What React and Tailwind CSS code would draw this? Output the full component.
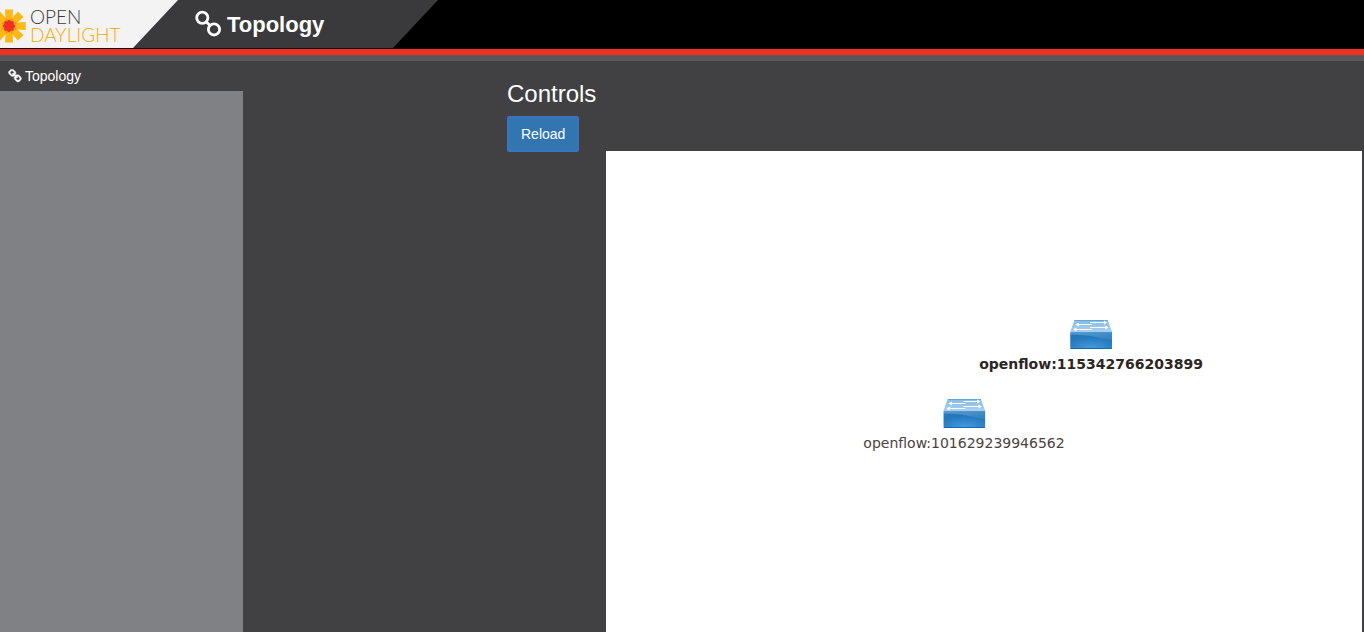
import React from "react";

const nodes = [
  { id: "openflow:115342766203899", x: 485, y: 169, bold: true },
  { id: "openflow:101629239946562", x: 358, y: 248, bold: false },
];

const petalAngles = [0, 45, 90, 135, 180, 225, 270, 315];

function ChainIcon({ className }) {
  return (
    <svg
      viewBox="0 0 1792 1792"
      fill="currentColor"
      stroke="currentColor"
      strokeWidth="70"
      className={className}
      aria-hidden="true"
    >
      <path d="M1520 1216q0-40-28-68l-208-208q-28-28-68-28-42 0-72 32 3 3 19 18.5t21.5 21.5 15 19 13 25.5 3.5 27.5q0 40-28 68t-68 28q-15 0-27.5-3.5t-25.5-13-19-15-21.5-21.5-18.5-19q-33 31-33 73 0 40 28 68l206 207q27 27 68 27 40 0 68-26l147-146q28-28 28-67zm-703-705q0-40-28-68l-206-207q-28-28-68-28-39 0-68 27l-147 146q-28 28-28 67 0 40 28 68l208 208q27 27 68 27 42 0 72-31-3-3-19-18.5t-21.5-21.5-15-19-13-25.5-3.5-27.5q0-40 28-68t68-28q15 0 27.5 3.5t25.5 13 19 15 21.5 21.5 18.5 19q33-31 33-73zm895 705q0 120-85 203l-147 146q-83 83-203 83-121 0-204-85l-206-207q-83-83-83-203 0-123 88-209l-88-88q-86 88-208 88-120 0-204-84l-208-208q-84-84-84-204t85-203l147-146q83-83 203-83 121 0 204 85l206 207q83 83 83 203 0 123-88 209l88 88q86-88 208-88 120 0 204 84l208 208q84 84 84 204z" />
    </svg>
  );
}

function NodesIcon() {
  return (
    <svg viewBox="0 0 28 28" className="h-7 w-7" fill="none" stroke="#fff" strokeWidth="2.8" aria-hidden="true">
      <circle cx="8.3" cy="7.8" r="5.6" />
      <circle cx="20" cy="19.4" r="5.6" />
      <path d="M12.2 11.7L16 15.4" />
    </svg>
  );
}

function Flower() {
  return (
    <svg viewBox="-9 -17 27 34" className="h-[34px] w-[27px]" aria-hidden="true">
      {petalAngles.map((a) => (
        <path key={a} d="M-4 -16.6H4L3.5 -8.5L0 0L-3.5 -8.5Z" fill="#fdb813" transform={`rotate(${a})`} />
      ))}
      {petalAngles.map((a) => (
        <path key={a} d="M-3.3 -3L0 -9L3.3 -3Z" fill="#f8931d" transform={`rotate(${a + 22.5})`} />
      ))}
      {petalAngles.map((a) => (
        <path key={a} d="M-2.2 -4.2L0 -6.6L2.2 -4.2L0 0Z" fill="#ef3124" transform={`rotate(${a + 45})`} />
      ))}
      <circle r="4.9" fill="#ef3124" />
    </svg>
  );
}

function SwitchIcon({ id }) {
  return (
    <svg viewBox="0 0 42 30" className="h-[30px] w-[42px]" aria-hidden="true">
      <defs>
        <radialGradient id={`${id}-front`} cx="0.5" cy="0.95" r="0.65">
          <stop offset="0" stopColor="#479be0" />
          <stop offset="1" stopColor="#2277bd" />
        </radialGradient>
        <linearGradient id={`${id}-top`} x1="0" y1="0" x2="0" y2="1">
          <stop offset="0" stopColor="#86bbe6" />
          <stop offset="1" stopColor="#a8d0f1" />
        </linearGradient>
        <linearGradient id={`${id}-gloss`} x1="0" y1="0" x2="0.6" y2="1">
          <stop offset="0" stopColor="#fff" stopOpacity="0.26" />
          <stop offset="1" stopColor="#fff" stopOpacity="0.08" />
        </linearGradient>
      </defs>
      <path d="M0 12H42V28Q42 29 41 29H1Q0 29 0 28Z" fill={`url(#${id}-front)`} />
      <path d="M0 12H42V20Q34 19.5 25 17Q16 14.5 0 14.5Z" fill={`url(#${id}-gloss)`} />
      <path d="M0.5 28.5H41.5" stroke="#1c69ab" strokeWidth="1" />
      <path d="M4.5 0H37.5L42 12H0Z" fill={`url(#${id}-top)`} />
      <path d="M4.5 0.5H37.5" stroke="#5ba0d6" strokeWidth="0.8" />
      <g stroke="#fff" strokeWidth="1.1" fill="none">
        <path d="M20 2.5H35.5M33.8 1L36 2.5L33.8 4" />
        <path d="M22 4.5H7M8.6 3L6.4 4.5L8.6 6" />
        <path d="M20 7.5H37M35.2 6L37.4 7.5L35.2 9" />
        <path d="M22 9.5H4.6M6.4 8L4.2 9.5L6.4 11" />
      </g>
    </svg>
  );
}

export default function App() {
  return (
    <div className="flex min-h-screen flex-col bg-[#414042] font-['Liberation_Sans',Arial,sans-serif] text-white">
      <header className="border-b-6 border-[#58585a] bg-black">
        <div className="flex h-[55px] items-start border-b-6 border-[#ef3124]">
          <div className="flex h-12 w-[438px] bg-[#3a3a3c] [clip-path:polygon(0_0,100%_0,393px_100%,0_100%)]">
            <a
              href="#home"
              aria-label="Open Daylight"
              className="flex h-12 w-[178px] items-center gap-[3px] bg-[#f3f3f3] pt-[3px] font-['Lato',sans-serif] text-[19px] leading-[18px] font-light [clip-path:polygon(0_0,100%_0,133px_100%,0_100%)]"
            >
              <Flower />
              <span className="flex flex-col">
                <span className="text-[#3f3936]">OPEN</span>
                <span className="text-[#fbac00]">DAYLIGHT</span>
              </span>
            </a>
            <h1 className="flex items-center gap-[5px] pl-4 text-[22px] font-bold">
              <NodesIcon />
              Topology
            </h1>
          </div>
        </div>
      </header>

      <div className="flex flex-1">
        <aside className="flex w-[243px] shrink-0 flex-col">
          <nav>
            <a href="#topology" className="flex h-[30px] items-center gap-[3px] pl-2 text-sm">
              <ChainIcon className="h-3.5 w-3.5" />
              Topology
            </a>
          </nav>
          <div className="flex-1 bg-[#808184]" />
        </aside>

        <main className="flex min-w-0 flex-1 flex-col">
          <section className="flex flex-col items-start gap-2 pt-[19px] pl-[264px]">
            <h2 className="text-2xl leading-7">Controls</h2>
            <button
              type="button"
              className="h-9 rounded-xs border-2 border-[#3c72c4] bg-[#3276b1] px-3 text-sm"
            >
              Reload
            </button>
          </section>
          <section className="relative -mt-px mr-0.5 ml-[363px] min-h-[481px] flex-1 overflow-hidden bg-white font-['DejaVu_Sans',Verdana,sans-serif] text-sm text-[#2d2523]">
            {nodes.map((n, i) => (
              <div
                key={n.id}
                className="absolute flex -translate-x-1/2 flex-col items-center gap-1"
                style={{ left: n.x, top: n.y }}
              >
                <SwitchIcon id={`switch-${i}`} />
                <span className={n.bold ? "font-bold" : "text-[#4a4340]"}>{n.id}</span>
              </div>
            ))}
          </section>
        </main>
      </div>
    </div>
  );
}
